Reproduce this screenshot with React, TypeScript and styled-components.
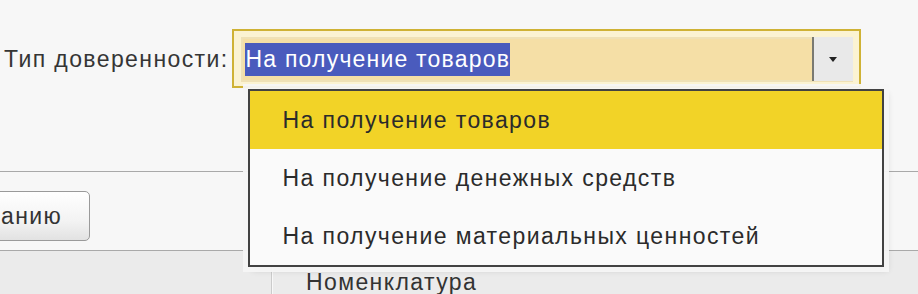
import React from "react";
import styled, { createGlobalStyle } from "styled-components";

const GlobalStyle = createGlobalStyle`
  html, body {
    margin: 0;
    padding: 0;
    background: #f7f7f7;
    overflow: hidden;
  }
  body {
    font-family: "Liberation Sans", Arial, sans-serif;
    font-size: 23px;
    letter-spacing: 1.4px;
    color: #333333;
  }
`;

const options = [
  "На получение товаров",
  "На получение денежных средств",
  "На получение материальных ценностей",
];

export default function App() {
  const [selected] = React.useState<number>(0);

  return (
    <>
      <GlobalStyle />
      <Form>
        <HeaderRow>
          <Label>Тип доверенности:</Label>
          <ComboWrapper>
            <ComboField>
              <ValueArea>
                <Selection>{options[selected]}</Selection>
              </ValueArea>
              <DropButton title="open">
                <Triangle />
              </DropButton>
            </ComboField>
            <DropdownList>
              {options.map((option, index) => (
                <DropdownItem key={option} active={index === selected}>
                  {option}
                </DropdownItem>
              ))}
            </DropdownList>
          </ComboWrapper>
        </HeaderRow>
        <ActionBar>
          <CommandButton type="button">анию</CommandButton>
        </ActionBar>
        <TableHeader>
          <HeaderCell />
          <HeaderCell>Номенклатура</HeaderCell>
        </TableHeader>
      </Form>
    </>
  );
}

const Form = styled.div`
  width: 918px;
  height: 294px;
  display: flex;
  flex-direction: column;
`;

const HeaderRow = styled.div`
  height: 172px;
  display: flex;
  align-items: flex-start;
  padding: 29px 0 0 4px;
  box-sizing: border-box;
`;

const Label = styled.div`
  line-height: 26px;
  margin-top: 17px;
  color: #353535;
  white-space: nowrap;
`;

const ComboWrapper = styled.div`
  position: relative;
  margin-left: 3px;
  width: 629px;
  height: 59px;
  box-sizing: border-box;
  border: 2px solid #cfb235;
  padding: 6px 6px 4px 7px;
  background: #fbf3d2;
`;

const ComboField = styled.div`
  display: flex;
  height: 45px;
  box-sizing: border-box;
  border: 2px solid #efe1b6;
  border-right: none;
  background: #f5dfa6;
`;

const ValueArea = styled.div`
  flex: 1;
  display: flex;
  align-items: center;
  padding-left: 2px;
`;

const Selection = styled.span`
  background: #4a5bbd;
  color: #ffffff;
  line-height: 33px;
  padding: 0 0 0 1px;
  letter-spacing: 1.2px;
  white-space: nowrap;
`;

const DropButton = styled.div`
  width: 41px;
  margin-top: -2px;
  margin-bottom: -1px;
  background: #e9e9e9;
  border-left: 2px solid #7a7a72;
  box-sizing: border-box;
  display: flex;
  align-items: center;
  justify-content: center;
`;

const Triangle = styled.div`
  width: 0;
  height: 0;
  border-left: 4px solid transparent;
  border-right: 4px solid transparent;
  border-top: 5px solid #222222;
`;

const DropdownList = styled.div`
  position: absolute;
  top: 58px;
  left: 14px;
  width: 636px;
  z-index: 10;
  box-sizing: border-box;
  border: 2px solid #424242;
  background: #fafafa;
  box-shadow: 0 0 0 5px rgba(246, 246, 246, 0.95),
    4px 4px 6px rgba(0, 0, 0, 0.12);
`;

type ItemProps = {
  active: boolean;
};

const DropdownItem = styled.div<ItemProps>`
  height: 58px;
  display: flex;
  align-items: center;
  padding-left: 33px;
  color: #2b2b2b;
  white-space: nowrap;
  background: ${(props) => (props.active ? "#f2d327" : "transparent")};
`;

const ActionBar = styled.div`
  height: 80px;
  box-sizing: border-box;
  border-top: 1px solid #a9a9a9;
  border-bottom: 1px solid #a9a9a9;
  display: flex;
  align-items: flex-start;
  padding-top: 19px;
`;

const CommandButton = styled.button`
  margin-left: -14px;
  height: 50px;
  padding: 0 27px 0 14px;
  border: 1px solid #9a9a9a;
  border-radius: 5px;
  background: linear-gradient(#ffffff, #f3f3f3 60%, #e2e2e2);
  font-family: "Liberation Sans", Arial, sans-serif;
  font-size: 23px;
  letter-spacing: 1.4px;
  color: #333333;
  cursor: pointer;
`;

const TableHeader = styled.div`
  flex: 1;
  display: grid;
  grid-template-columns: 272px 1fr;
  background: #ebebeb;
`;

const HeaderCell = styled.div`
  line-height: 24px;
  padding: 19px 0 0 34px;
  color: #333333;
  white-space: nowrap;
  &:first-child {
    padding: 0;
    border-right: 1px solid #cbcbcb;
    box-shadow: 1px 0 0 #f8f8f8;
  }
`;
